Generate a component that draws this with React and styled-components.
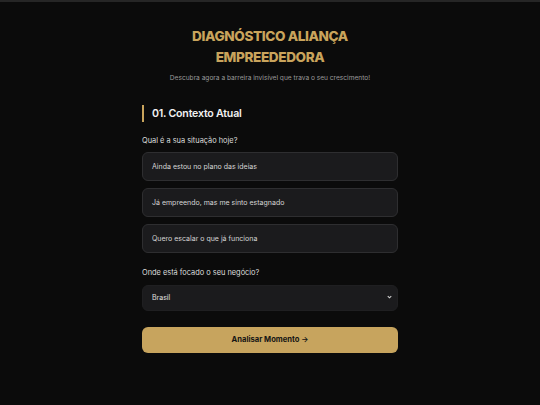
import styled, { createGlobalStyle } from "styled-components"

const GlobalStyle = createGlobalStyle`
  html, body {
    margin: 0;
    padding: 0;
    background: #0b0b0b;
  }
  body {
    font-family: Inter, "Liberation Sans", sans-serif;
    color: #e6e6e6;
  }
`

const opciones = [
  "Ainda estou no plano das ideias",
  "Já empreendo, mas me sinto estagnado",
  "Quero escalar o que já funciona",
]

export default function App() {
  return (
    <Page>
      <GlobalStyle />
      <TopStrip />
      <Container>
        <Header>
          <Title>DIAGNÓSTICO ALIANÇA<br />EMPREEDEDORA</Title>
          <Subtitle>Descubra agora a barreira invisível que trava o seu crescimento!</Subtitle>
        </Header>

        <SectionTitle>01. Contexto Atual</SectionTitle>

        <Field>
          <Label>Qual é a sua situação hoje?</Label>
          <Options>
            {opciones.map((texto) => (
              <Option key={texto} type="button">{texto}</Option>
            ))}
          </Options>
        </Field>

        <Field $spaced>
          <Label>Onde está focado o seu negócio?</Label>
          <SelectWrap>
            <Select defaultValue="Brasil">
              <option>Brasil</option>
              <option>Portugal</option>
              <option>Outro</option>
            </Select>
            <Chevron viewBox="0 0 10 10">
              <path d="M2.5 3.8 L5 6.2 L7.5 3.8" />
            </Chevron>
          </SelectWrap>
        </Field>

        <SubmitButton type="button">Analisar Momento →</SubmitButton>
      </Container>
    </Page>
  )
}

const Page = styled.div`
  min-height: 405px;
  background: #0b0b0b;
`

const TopStrip = styled.div`
  height: 2px;
  background: #262626;
`

const Container = styled.main`
  width: 256px;
  margin: 0 auto;
  padding-top: 24px;
  display: flex;
  flex-direction: column;
`

const Header = styled.header`
  text-align: center;
  display: flex;
  flex-direction: column;
  gap: 5px;
  margin-bottom: 22px;
`

const Title = styled.h1`
  margin: 0;
  font-size: 13.6px;
  line-height: 21px;
  font-weight: 800;
  color: #c9a45c;
  letter-spacing: -0.4px;
`

const Subtitle = styled.p`
  margin: 0;
  font-size: 6.6px;
  line-height: 10px;
  color: #9a9a9a;
`

const SectionTitle = styled.h2`
  margin: 0 0 14px;
  padding-left: 8px;
  border-left: 2.5px solid #c9a45c;
  font-size: 10.6px;
  line-height: 17px;
  font-weight: 600;
  color: #f2f2f2;
  letter-spacing: -0.2px;
`

const Field = styled.div`
  display: flex;
  flex-direction: column;
  gap: 6px;
  margin-top: ${(p) => (p.$spaced ? "15px" : "0")};
`

const Label = styled.label`
  font-size: 7.4px;
  line-height: 10px;
  color: #dedede;
`

const Options = styled.div`
  display: flex;
  flex-direction: column;
  gap: 7px;
`

const Option = styled.button`
  height: 29px;
  padding: 0 9px;
  text-align: left;
  background: #1b1b1d;
  border: 1px solid #2e2e30;
  border-radius: 6px;
  font-family: inherit;
  font-size: 7px;
  color: #d6d6d6;
  cursor: pointer;
`

const SelectWrap = styled.div`
  position: relative;
`

const Select = styled.select`
  width: 100%;
  height: 26px;
  padding: 0 9px;
  appearance: none;
  background: #1b1b1d;
  border: 1px solid #1f1f21;
  border-radius: 6px;
  font-family: inherit;
  font-size: 7px;
  color: #e0e0e0;
  outline: none;
`

const Chevron = styled.svg`
  position: absolute;
  right: 5px;
  top: 50%;
  width: 7px;
  height: 7px;
  transform: translateY(-50%);
  fill: none;
  stroke: #d0d0d0;
  stroke-width: 1.6;
  pointer-events: none;
`

const SubmitButton = styled.button`
  margin-top: 16px;
  height: 26px;
  background: #c7a45e;
  border: none;
  border-radius: 6px;
  font-family: inherit;
  font-size: 7.6px;
  font-weight: 700;
  color: #141414;
  cursor: pointer;
`
